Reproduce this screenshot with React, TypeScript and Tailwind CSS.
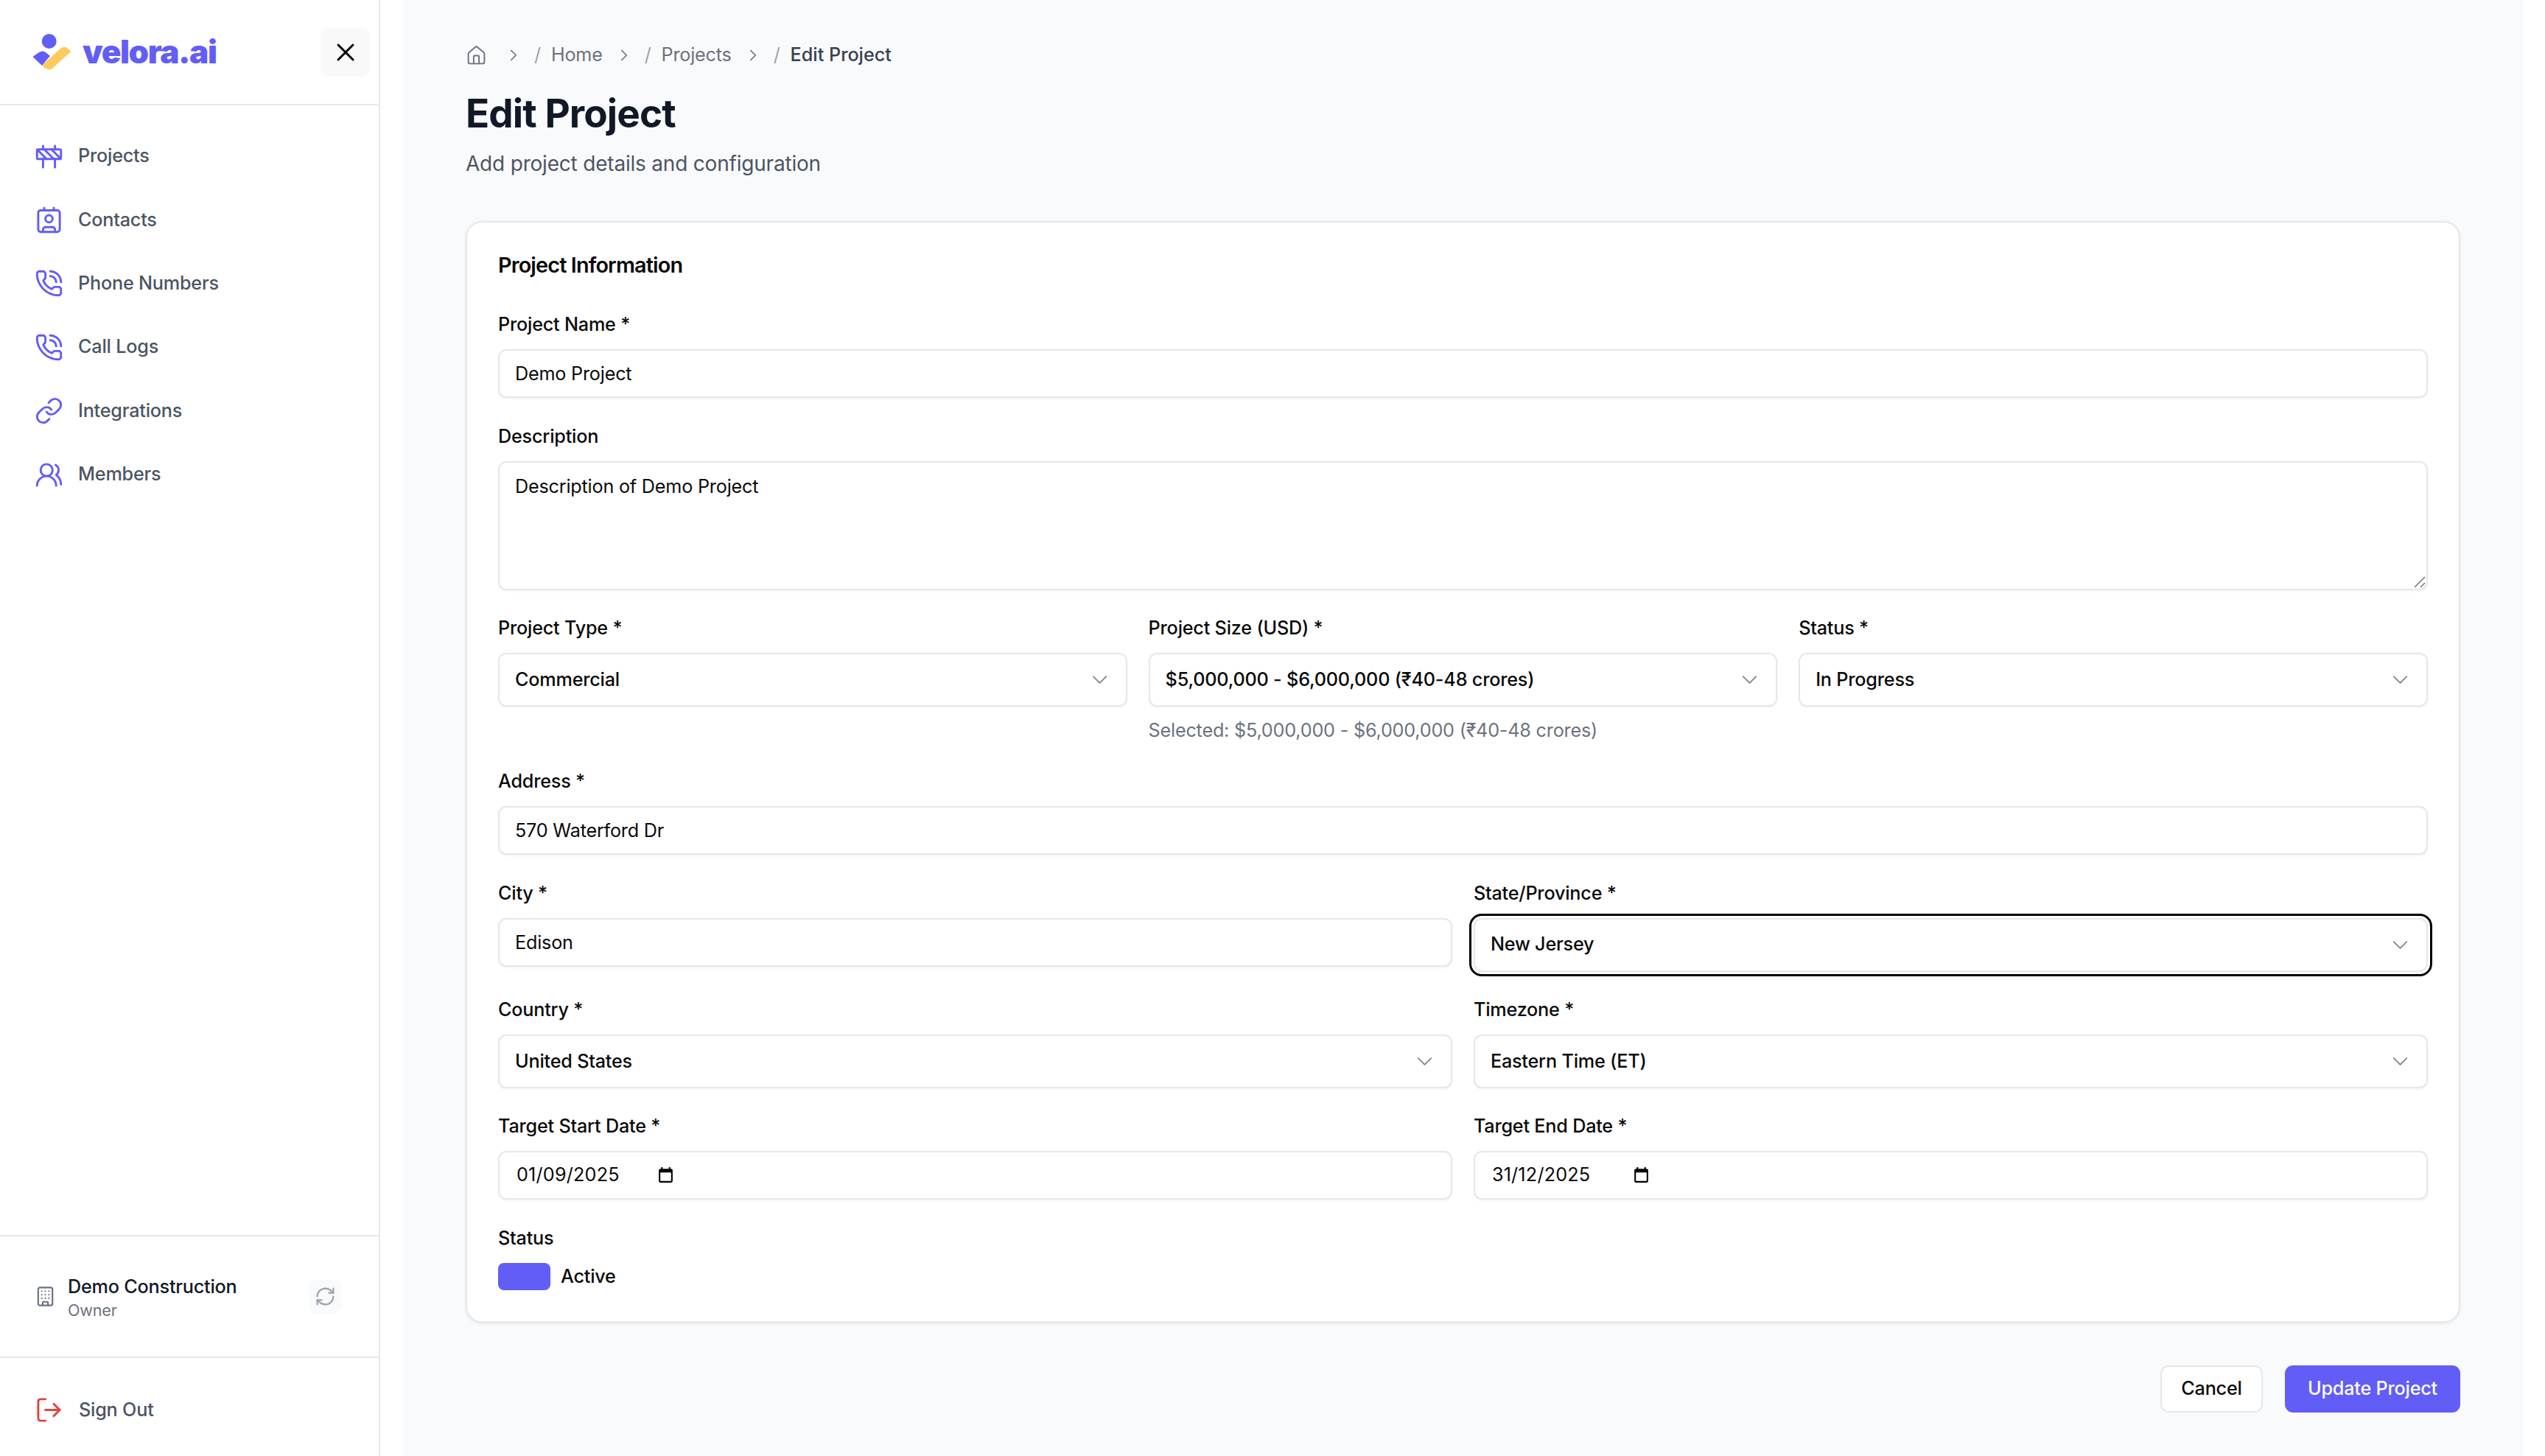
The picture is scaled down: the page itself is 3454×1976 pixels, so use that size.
import React from 'react';
import {
  Building,
  ChevronDown,
  ChevronRight,
  Construction,
  Contact,
  House,
  Link,
  LogOut,
  PhoneCall,
  RefreshCw,
  UsersRound,
  X,
} from 'lucide-react';

const navItems = [
  { label: 'Projects', icon: Construction },
  { label: 'Contacts', icon: Contact },
  { label: 'Phone Numbers', icon: PhoneCall },
  { label: 'Call Logs', icon: PhoneCall },
  { label: 'Integrations', icon: Link },
  { label: 'Members', icon: UsersRound },
];

function Logo() {
  return (
    <svg width="54" height="52" viewBox="0 0 54 52">
      <circle cx="22.7" cy="11" r="10" fill="#635DF7" />
      <path d="M0.3 32 L9 26 Q14 23 18 26 L24 31 L13 44 Z" fill="#635DF7" />
      <path d="M12.7 44 L38 21 Q43 17 47 20 L52.5 25 L30 45 Q25 51 20 49 Z" fill="#FBCB5E" />
    </svg>
  );
}

function Sidebar() {
  return (
    <aside className="flex h-[1976px] w-[516px] shrink-0 flex-col border-r-2 border-[#e5e7eb] bg-white">
      <div className="flex h-[143px] shrink-0 items-center justify-between border-b-2 border-[#e5e7eb] pl-[44px] pr-[12px]">
        <div className="flex items-center gap-[14px]">
          <Logo />
          <span className="-mt-[2px] text-[44px] font-black tracking-[-1.4px] text-[#635DF7]">velora.ai</span>
        </div>
        <button className="flex h-[66px] w-[67px] items-center justify-center rounded-[11px] bg-[#f9f9f9] text-black">
          <X size={40} strokeWidth={1.8} />
        </button>
      </div>

      <nav className="flex flex-1 flex-col pt-[26px]">
        {navItems.map((item) => (
          <a key={item.label} className="flex h-[86.4px] items-center gap-[20px] pl-[47px] text-[25.2px] font-medium text-[#4b5563]">
            <item.icon size={39} strokeWidth={1.8} className="text-[#635DF7]" />
            <span>{item.label}</span>
          </a>
        ))}
      </nav>

      <div className="flex h-[165px] shrink-0 items-center border-t-2 border-[#e5e7eb] pl-[47px] pr-[50px]">
        <Building size={29} strokeWidth={1.8} className="text-[#6b7280]" />
        <div className="ml-[16px] flex-1">
          <div className="text-[25.2px] font-medium leading-[36px] text-[#111827]">Demo Construction</div>
          <div className="text-[21.6px] leading-[28px] text-[#6b7280]">Owner</div>
        </div>
        <button className="flex h-[45px] w-[45px] items-center justify-center rounded-[11px] bg-[#f9fafb] text-[#9ca3af]">
          <RefreshCw size={29} strokeWidth={1.8} />
        </button>
      </div>

      <div className="flex h-[135px] shrink-0 items-center gap-[21px] border-t-2 border-[#e5e7eb] pt-[8px] pl-[47px] text-[25.2px] font-medium text-[#4b5563]">
        <LogOut size={39} strokeWidth={1.8} className="text-[#e0453f]" />
        <span>Sign Out</span>
      </div>
    </aside>
  );
}

function Breadcrumb() {
  return (
    <div className="flex h-[36px] items-center text-[25.2px] text-[#6b7280]">
      <House size={29} strokeWidth={1.6} />
      <ChevronRight size={26} strokeWidth={1.6} className="ml-[23px]" />
      <span className="ml-[15px] text-[#9ca3af]">/</span>
      <span className="ml-[14px]">Home</span>
      <ChevronRight size={26} strokeWidth={1.6} className="ml-[16px]" />
      <span className="ml-[15px] text-[#9ca3af]">/</span>
      <span className="ml-[14px]">Projects</span>
      <ChevronRight size={26} strokeWidth={1.6} className="ml-[16px]" />
      <span className="ml-[15px] text-[#9ca3af]">/</span>
      <span className="ml-[14px] font-medium tracking-[0px] text-[#374151]">Edit Project</span>
    </div>
  );
}

function Field({ label, children }: { label: string; children: React.ReactNode }) {
  return (
    <div className="min-w-0">
      <label className="mb-[16px] block text-[25.2px] font-medium leading-[36px] text-[#0a0a0a]">{label}</label>
      {children}
    </div>
  );
}

const boxClass = 'rounded-[11px] border-2 border-[#e5e7eb] bg-white text-[25.2px] text-[#0a0a0a] shadow-[0_2px_3px_rgba(0,0,0,0.04)]';

function TextInput({ value }: { value: string }) {
  return <input type="text" defaultValue={value} className={`${boxClass} h-[66px] w-full px-[21px] outline-none`} />;
}

function Select({ value, focused }: { value: string; focused?: boolean }) {
  return (
    <button
      type="button"
      className={`${boxClass} flex h-[72.6px] w-full items-center justify-between pl-[21px] pr-[18px] font-medium ${
        focused ? 'outline-[3.6px] outline-offset-[3.6px] outline-black' : ''
      }`}
    >
      <span>{value}</span>
      <ChevronDown size={35} strokeWidth={1.2} className="text-[#7b818c]" />
    </button>
  );
}

function DateInput({ value }: { value: string }) {
  return (
    <div className={`${boxClass} flex h-[66px] w-full items-center gap-[47px] px-[23px]`}>
      <span className="w-[143px] tracking-[0.2px]">{value}</span>
      <svg width="25" height="25" viewBox="0 0 24 24" fill="#000">
        <path d="M19 3h-1V1h-2v2H8V1H6v2H5c-1.11 0-1.99.9-1.99 2L3 19c0 1.1.89 2 2 2h14c1.1 0 2-.9 2-2V5c0-1.1-.9-2-2-2zm0 16H5V8h14v11z" />
      </svg>
    </div>
  );
}

function ProjectForm() {
  return (
    <div className="mt-[56px] rounded-[22px] border-2 border-[#e5e7eb] bg-white px-[42px] pb-[42px] pt-[38px] shadow-[0_2px_4px_rgba(0,0,0,0.07)]">
      <h2 className="mb-[42px] text-[28.8px] font-semibold leading-[40px] tracking-[-0.85px] text-[#0a0a0a]">Project Information</h2>
      <div className="flex flex-col gap-[33.6px]">
        <Field label="Project Name *">
          <TextInput value="Demo Project" />
        </Field>
        <Field label="Description">
          <div className="relative">
            <textarea
              defaultValue="Description of Demo Project"
              className={`${boxClass} block h-[175px] w-full resize-none px-[21px] py-[14px] leading-[36px] outline-none`}
            />
            <svg width="16" height="16" viewBox="0 0 16 16" className="absolute bottom-[3px] right-[3px]" stroke="#6e6e6e" strokeWidth="1.5">
              <path d="M1 15 L15 1" />
              <path d="M9 15 L15 9" />
            </svg>
          </div>
        </Field>
        <div className="grid grid-cols-3 items-start gap-[28.8px]">
          <Field label="Project Type *">
            <Select value="Commercial" />
          </Field>
          <div>
            <Field label="Project Size (USD) *">
              <Select value="$5,000,000 - $6,000,000 (₹40-48 crores)" />
            </Field>
            <p className="mt-[14px] text-[25.2px] leading-[36px] text-[#6b7280]">Selected: $5,000,000 - $6,000,000 (₹40-48 crores)</p>
          </div>
          <Field label="Status *">
            <Select value="In Progress" />
          </Field>
        </div>
        <Field label="Address *">
          <TextInput value="570 Waterford Dr" />
        </Field>
        <div className="grid grid-cols-2 gap-x-[28.8px] gap-y-[33.6px]">
          <Field label="City *">
            <TextInput value="Edison" />
          </Field>
          <Field label="State/Province *">
            <Select value="New Jersey" focused />
          </Field>
          <Field label="Country *">
            <Select value="United States" />
          </Field>
          <Field label="Timezone *">
            <Select value="Eastern Time (ET)" />
          </Field>
          <Field label="Target Start Date *">
            <DateInput value="01/09/2025" />
          </Field>
          <Field label="Target End Date *">
            <DateInput value="31/12/2025" />
          </Field>
        </div>
        <Field label="Status">
          <div className="flex items-center gap-[14px]">
            <div className="h-[37px] w-[71px] rounded-[8px] bg-[#635DF7]" />
            <span className="text-[25.2px] font-medium leading-[37px] text-[#0a0a0a]">Active</span>
          </div>
        </Field>
      </div>
    </div>
  );
}

export default function App() {
  return (
    <div className="flex min-h-[1976px] bg-white font-['Inter',sans-serif] tracking-[-0.2px]">
      <Sidebar />
      <main className="ml-[30px] mr-[29px] flex-1 bg-[#f9fafb] px-[86px] pt-[57px]">
        <Breadcrumb />
        <h1 className="mt-[31px] text-[53px] font-bold leading-[60px] tracking-[-0.9px] text-[#111827]">Edit Project</h1>
        <p className="mt-[16px] text-[28px] leading-[44px] text-[#4b5563]">Add project details and configuration</p>
        <ProjectForm />
        <div className="mt-[58px] flex justify-end gap-[30px]">
          <button className="h-[64px] w-[139px] rounded-[11px] border-2 border-[#e5e7eb] bg-white text-[25.2px] font-medium text-[#0a0a0a]">Cancel</button>
          <button className="h-[64px] w-[238px] rounded-[11px] bg-[#635DF7] text-[25.2px] font-medium text-white">Update Project</button>
        </div>
      </main>
    </div>
  );
}
